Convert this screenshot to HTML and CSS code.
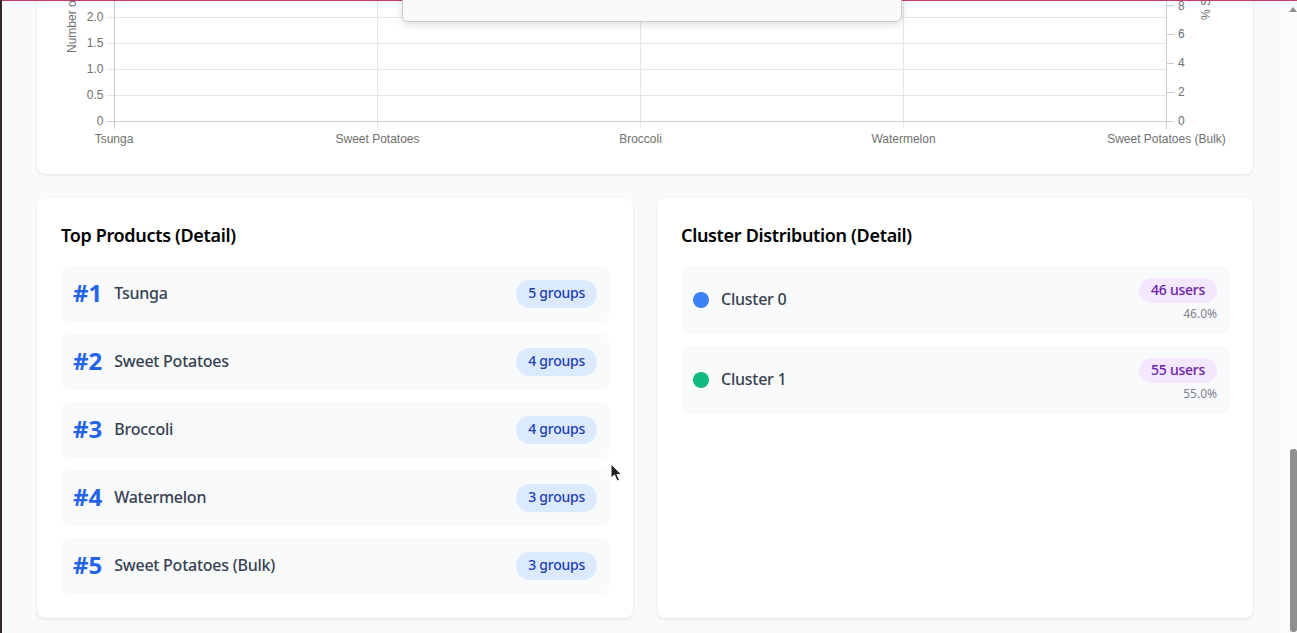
FILE: index.html
```html
<!DOCTYPE html>
<html lang="en">
<head>
    <meta charset="UTF-8">
    <meta name="viewport" content="width=device-width, initial-scale=1.0">
    <title>Analytics Dashboard</title>
    <link rel="stylesheet" href="styles.css">
</head>
<body>
    <div class="desk-edge"></div>

    <main class="page">
        <section class="card chart-card">
            <svg class="chart" width="1216" height="194" viewBox="37 -20 1216 194">
                <!-- horizontal grid -->
                <g class="grid">
                    <path d="M106 17.5H1166M106 43.5H1166M106 69.5H1166M106 95.5H1166"/>
                    <path d="M377.5 -20V129M640.5 -20V129M903.5 -20V129"/>
                </g>
                <g class="axis">
                    <path d="M106 121.5H1166M114.5 -20V129M1166.5 -20V129"/>
                    <path d="M1166 121.5H1174M1166 92.5H1174M1166 63.5H1174M1166 34.5H1174M1166 5.5H1174"/>
                </g>
                <g class="tick tick-left">
                    <text x="103.5" y="21">2.0</text>
                    <text x="103.5" y="47">1.5</text>
                    <text x="103.5" y="73">1.0</text>
                    <text x="103.5" y="99">0.5</text>
                    <text x="103.5" y="125">0</text>
                </g>
                <g class="tick tick-right">
                    <text x="1178" y="125">0</text>
                    <text x="1178" y="96">2</text>
                    <text x="1178" y="67">4</text>
                    <text x="1178" y="38">6</text>
                    <text x="1178" y="10">8</text>
                </g>
                <g class="tick tick-bottom">
                    <text x="114" y="143">Tsunga</text>
                    <text x="377.5" y="143">Sweet Potatoes</text>
                    <text x="640.5" y="143">Broccoli</text>
                    <text x="903.5" y="143">Watermelon</text>
                    <text x="1166.5" y="143">Sweet Potatoes (Bulk)</text>
                </g>
                <text class="tick" transform="translate(76 53) rotate(-90)">Number of Groups</text>
                <text class="tick" transform="translate(1210 20) rotate(-90)">% Share</text>
            </svg>
        </section>

        <div class="detail-grid">
            <section class="card">
                <h2>Top Products (Detail)</h2>
                <ul class="list">
                    <li class="row product-row">
                        <span class="rank">#1</span>
                        <span class="name">Tsunga</span>
                        <span class="badge badge-blue">5 groups</span>
                    </li>
                    <li class="row product-row">
                        <span class="rank">#2</span>
                        <span class="name">Sweet Potatoes</span>
                        <span class="badge badge-blue">4 groups</span>
                    </li>
                    <li class="row product-row">
                        <span class="rank">#3</span>
                        <span class="name">Broccoli</span>
                        <span class="badge badge-blue">4 groups</span>
                    </li>
                    <li class="row product-row">
                        <span class="rank">#4</span>
                        <span class="name">Watermelon</span>
                        <span class="badge badge-blue">3 groups</span>
                    </li>
                    <li class="row product-row">
                        <span class="rank">#5</span>
                        <span class="name">Sweet Potatoes (Bulk)</span>
                        <span class="badge badge-blue">3 groups</span>
                    </li>
                </ul>
            </section>

            <section class="card">
                <h2>Cluster Distribution (Detail)</h2>
                <ul class="list">
                    <li class="row">
                        <span class="dot dot-blue"></span>
                        <span class="name">Cluster 0</span>
                        <div class="stat">
                            <span class="badge badge-purple">46 users</span>
                            <span class="percent">46.0%</span>
                        </div>
                    </li>
                    <li class="row">
                        <span class="dot dot-green"></span>
                        <span class="name">Cluster 1</span>
                        <div class="stat">
                            <span class="badge badge-purple">55 users</span>
                            <span class="percent">55.0%</span>
                        </div>
                    </li>
                </ul>
            </section>
        </div>
    </main>

    <div class="scrollbar">
        <svg class="scroll-arrow" width="8" height="5" viewBox="0 0 8 5"><path d="M4 0L8 5H0Z"/></svg>
        <div class="scroll-thumb"></div>
    </div>

    <div class="top-line"></div>
    <div class="popup"></div>

    <svg class="cursor" width="13" height="20" viewBox="0 0 13 20">
        <path d="M1 1V15L4.5 12L7 18L9.5 17L7 11.5H11.5Z" fill="#222" stroke="#fff" stroke-width="1"/>
    </svg>
</body>
</html>
```

FILE: styles.css
```css
* {
    box-sizing: border-box;
}
html, body {
    height: 100%;
    margin: 0;
    overflow: hidden;
}
body {
    display: flex;
    position: relative;
    font-family: "Noto Sans", sans-serif;
    background-color: #f9fafb;
    color: #374151;
}
.desk-edge {
    width: 2px;
    background-color: #33282a;
}
.page {
    flex: 1;
    min-width: 0;
    padding: 0 34px 0 35px;
    overflow: hidden;
}
.card {
    background-color: #ffffff;
    border-radius: 8px;
    padding: 24px;
    box-shadow: 0 1px 3px rgba(0, 0, 0, 0.1);
}
.chart-card {
    margin-top: -20px;
    padding: 0;
}
.chart {
    display: block;
}
.grid path {
    fill: none;
    stroke: #e6e6e6;
}
.axis path {
    fill: none;
    stroke: #cccccc;
}
.tick {
    font-family: "Liberation Sans", sans-serif;
    font-size: 12px;
    fill: #707070;
}
.tick-left {
    text-anchor: end;
}
.tick-bottom {
    text-anchor: middle;
}
.detail-grid {
    display: grid;
    grid-template-columns: 1fr 1fr;
    gap: 24px;
    margin-top: 24px;
}
h2 {
    margin: 0 0 18px;
    font-size: 18px;
    line-height: 26px;
    font-weight: 600;
    letter-spacing: -0.33px;
    color: #000000;
}
.list {
    display: flex;
    flex-direction: column;
    gap: 12px;
    margin: 0;
    padding: 0;
    list-style: none;
}
.row {
    display: flex;
    align-items: center;
    gap: 12px;
    padding: 12px;
    background-color: #f9fafb;
    border-radius: 8px;
}
.product-row {
    height: 56px;
}
.rank {
    padding-bottom: 2px;
    font-size: 24px;
    line-height: 32px;
    font-weight: 700;
    color: #2563eb;
}
.name {
    flex: 1;
    padding-bottom: 2px;
    font-size: 16px;
    font-weight: 500;
    letter-spacing: -0.25px;
}
.badge {
    padding: 3px 12px 5px;
    border-radius: 9999px;
    font-size: 14px;
    line-height: 20px;
    font-weight: 500;
    letter-spacing: -0.25px;
}
.badge-blue {
    background-color: #dbeafe;
    color: #1e40af;
}
.badge-purple {
    padding: 2px 12px 4px;
    line-height: 19px;
    background-color: #f3e8ff;
    color: #6b21a8;
}
.dot {
    width: 16px;
    height: 16px;
    border-radius: 50%;
}
.dot-blue {
    background-color: #3b82f6;
}
.dot-green {
    background-color: #10b981;
}
.stat {
    display: flex;
    flex-direction: column;
    align-items: flex-end;
    gap: 3px;
}
.percent {
    font-size: 12px;
    line-height: 16px;
    color: #7b8390;
}
.scrollbar {
    display: flex;
    flex-direction: column;
    width: 10px;
    padding: 7px 0 1px 3px;
    background-color: #fbfbfc;
}
.scroll-arrow {
    fill: #8f8f8f;
    margin-left: -1px;
}
.scroll-thumb {
    width: 7px;
    height: 183px;
    margin-top: auto;
    background-color: #8f8f8f;
    border-radius: 3px;
}
.top-line {
    position: absolute;
    top: 0;
    left: 2px;
    right: 0;
    height: 1px;
    background-color: #c2386f;
}
.popup {
    position: absolute;
    top: -20px;
    left: 402px;
    width: 500px;
    height: 42px;
    background-color: #fafafa;
    border: 1px solid #cccccc;
    border-radius: 6px;
    box-shadow: 0 2px 8px rgba(0, 0, 0, 0.15);
}
.cursor {
    position: absolute;
    left: 610px;
    top: 463px;
}
```
